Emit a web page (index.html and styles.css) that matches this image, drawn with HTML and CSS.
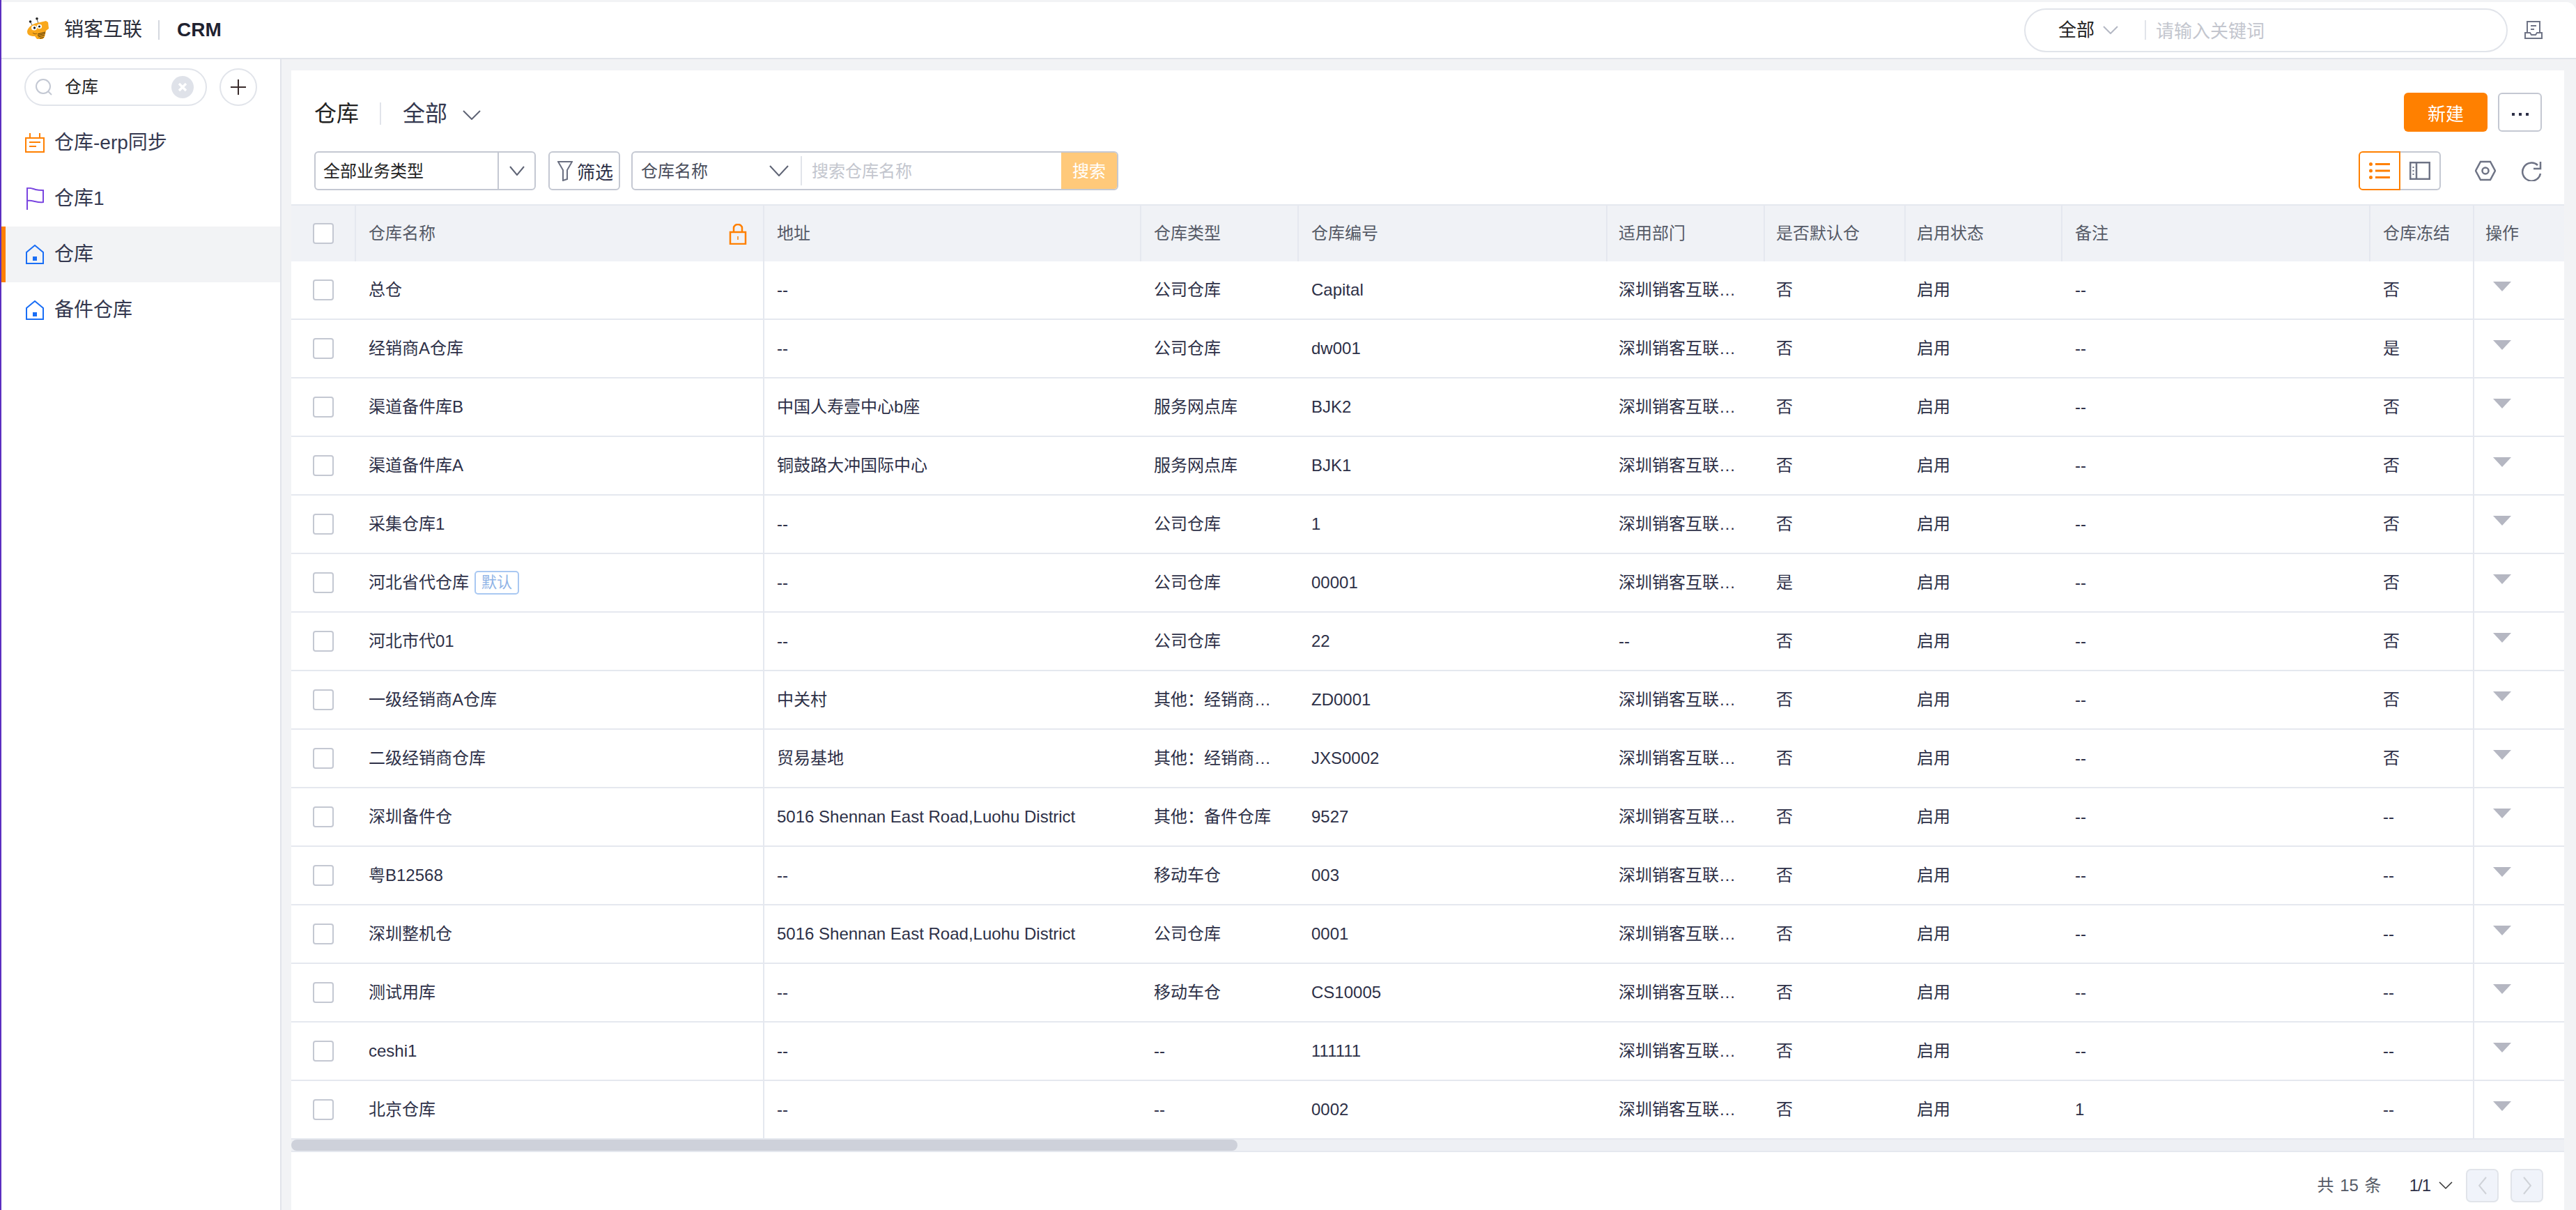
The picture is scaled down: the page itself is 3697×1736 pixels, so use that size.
FILE: index.html
```html
<!DOCTYPE html>
<html lang="zh-CN">
<head>
    <meta charset="UTF-8">
    <meta name="viewport" content="width=device-width, initial-scale=1.0">
    <title>仓库 - CRM</title>
    <link rel="stylesheet" href="styles.css">
</head>
<body>
    <header class="topbar">
        <div class="brand">
            <svg class="brand-logo" width="34" height="36" viewBox="0 0 34 36">
                <path d="M5 7l3 6M14 2l2 7" stroke="#555" stroke-width="1" fill="none"/>
                <circle cx="4.500" cy="6" r="1.800" fill="#222"/>
                <circle cx="14" cy="1.800" r="1.800" fill="#222"/>
                <path d="M0 20C1 14 8 9 14 8L27 5l3 2 1 9-4 3-2 9-3 3h-8l-3-4C5 27 0 26 0 20z" fill="#f9a81c"/>
                <ellipse cx="10" cy="15" rx="4" ry="3.500" fill="#fff"/>
                <ellipse cx="17.500" cy="13" rx="3.600" ry="3.200" fill="#fff"/>
                <circle cx="10.500" cy="15" r="1.700" fill="#222"/>
                <circle cx="17.500" cy="13" r="1.600" fill="#222"/>
                <path d="M8 22c2 2 4 2 6 1" stroke="#8a5a10" stroke-width="1" fill="none"/>
                <path d="M15 24l11-3M15 26l11-3M16 28l9-2.500M18 30l6-1.500" stroke="#4a3208" stroke-width="1" fill="none"/>
            </svg>
            <span class="brand-name">销客互联</span>
            <span class="brand-sep"></span>
            <span class="brand-app">CRM</span>
        </div>
        <div class="top-search">
            <span class="top-scope">全部</span>
            <svg class="chev" width="22" height="12" viewBox="0 0 22 12"><path d="M1 1l10 10L21 1" stroke="#b4b8c4" stroke-width="2" fill="none"/></svg>
            <span class="top-sep"></span>
            <span class="top-placeholder">请输入关键词</span>
        </div>
        <svg class="top-icon" width="26" height="26" viewBox="0 0 26 26" fill="none" stroke="#6e7385" stroke-width="2">
            <path d="M4 16V1h18v15"/>
            <path d="M1 17h7l2 3h6l2-3h7v8H1z"/>
            <path d="M9 7h8M9 12h5"/>
        </svg>
    </header>

    <div class="layout">
        <aside class="sidebar">
            <div class="side-search">
                <div class="side-input">
                    <svg width="24" height="24" viewBox="0 0 24 24" fill="none" stroke="#c3c8d3" stroke-width="2"><circle cx="11" cy="11" r="10"/><path d="M18 18l5 5"/></svg>
                    <span class="side-query">仓库</span>
                    <span class="side-clear">
                        <svg width="14" height="14" viewBox="0 0 14 14"><path d="M2 2l10 10M12 2L2 12" stroke="#fff" stroke-width="3.400"/></svg>
                    </span>
                </div>
                <span class="side-add">
                    <svg width="22" height="22" viewBox="0 0 22 22"><path d="M11 0v22M0 11h22" stroke="#3a2c2c" stroke-width="2"/></svg>
                </span>
            </div>
            <ul class="side-list">
                <li class="side-item">
                    <svg width="28" height="28" viewBox="0 0 28 28" fill="none" stroke="#ff8000" stroke-width="2"><path d="M1 7h26v20H1zM7 0v7M21 0v7"/><path d="M6 13h16M6 19h10"/></svg>
                    仓库-erp同步
                </li>
                <li class="side-item">
                    <svg width="28" height="32" viewBox="0 0 28 32" fill="none" stroke="#7a45e0" stroke-width="2"><path d="M3 32V1c5-1 8 1 12 2 4 1 7 1 11 1v17c-4 1-8 0-12-1-4-1-7-2-11-1"/></svg>
                    仓库1
                </li>
                <li class="side-item active">
                    <svg width="28" height="28" viewBox="0 0 28 28" fill="none" stroke="#1a6ef5" stroke-width="2"><path d="M2 27V11L14 1l12 10v16z"/><rect x="11" y="17" width="6" height="6" fill="#1a6ef5" stroke="none"/></svg>
                    仓库
                </li>
                <li class="side-item">
                    <svg width="28" height="28" viewBox="0 0 28 28" fill="none" stroke="#1a6ef5" stroke-width="2"><path d="M2 27V11L14 1l12 10v16z"/><rect x="11" y="17" width="6" height="6" fill="#1a6ef5" stroke="none"/></svg>
                    备件仓库
                </li>
            </ul>
        </aside>

        <main class="main">
            <section class="card">
                <div class="toolbar">
                    <div class="title-row">
                        <h1 class="title">仓库</h1>
                        <span class="title-sep"></span>
                        <span class="title-scope">全部</span>
                        <svg class="title-chev" width="26" height="14" viewBox="0 0 26 14"><path d="M1 1l12 12L25 1" stroke="#5f6475" stroke-width="2" fill="none"/></svg>
                        <div class="title-actions">
                            <button class="btn-new">新建</button>
                            <button class="btn-more"><i></i><i></i><i></i></button>
                        </div>
                    </div>
                    <div class="filter-row">
                        <div class="select-box">
                            <span class="select-text">全部业务类型</span>
                            <span class="select-arrow">
                                <svg width="22" height="14" viewBox="0 0 22 14"><path d="M1 1l10 12L21 1" stroke="#5f6475" stroke-width="2" fill="none"/></svg>
                            </span>
                        </div>
                        <button class="btn-filter">
                            <svg width="22" height="30" viewBox="0 0 22 30" fill="none" stroke="#6a6f80" stroke-width="2"><path d="M1 2h20l-7 12v13l-6 2V14z"/></svg>
                            筛选
                        </button>
                        <div class="name-search">
                            <span class="name-field">仓库名称</span>
                            <svg width="28" height="16" viewBox="0 0 28 16"><path d="M1 1l13 14L27 1" stroke="#5f6475" stroke-width="2" fill="none"/></svg>
                            <span class="name-sep"></span>
                            <span class="name-placeholder">搜索仓库名称</span>
                            <span class="name-btn">搜索</span>
                        </div>
                        <div class="view-tools">
                            <div class="view-toggle">
                                <span class="view-btn on">
                                    <svg width="30" height="24" viewBox="0 0 30 24" fill="#ff8000"><circle cx="2.500" cy="2.500" r="2.500"/><circle cx="2.500" cy="12" r="2.500"/><circle cx="2.500" cy="21.500" r="2.500"/><rect x="9" y="1" width="21" height="3"/><rect x="9" y="10.500" width="21" height="3"/><rect x="9" y="20" width="21" height="3"/></svg>
                                </span>
                                <span class="view-btn">
                                    <svg width="30" height="26" viewBox="0 0 30 26" fill="none" stroke="#6e7385" stroke-width="2.500"><rect x="1.200" y="1.200" width="27.600" height="23.600"/><path d="M10 1v24"/><path d="M5.500 7v12" stroke-width="2" stroke-dasharray="2 3"/></svg>
                                </span>
                            </div>
                            <svg class="tool-gear" width="30" height="30" viewBox="0 0 30 30" fill="none" stroke="#6e7385" stroke-width="2.500"><path d="M8 2h14l7 13-7 13H8L1 15z"/><circle cx="15" cy="15" r="4.500"/></svg>
                            <svg class="tool-refresh" width="30" height="30" viewBox="0 0 30 30" fill="none" stroke="#6e7385" stroke-width="2.500"><path d="M28 19A13 13 0 1 1 24 7"/><path d="M28 2v10H18"/></svg>
                        </div>
                    </div>
                </div>

                <table class="grid">
                    <colgroup>
                        <col class="c-check"><col class="c-name"><col class="c-addr"><col class="c-type"><col class="c-code"><col class="c-dept"><col class="c-def"><col class="c-state"><col class="c-note"><col class="c-freeze"><col class="c-op">
                    </colgroup>
                    <thead>
                        <tr>
                            <th class="check"><span class="box"></span></th>
                            <th class="name-head">仓库名称
                                <svg class="lock" width="26" height="30" viewBox="0 0 26 30" fill="none" stroke="#ff8000" stroke-width="2.500"><rect x="2" y="12" width="22" height="17"/><path d="M7 12V6a6 5 0 0 1 12 0v6"/><path d="M13 18v5" stroke-width="1.500"/></svg>
                            </th>
                            <th>地址</th><th>仓库类型</th><th>仓库编号</th><th>适用部门</th><th>是否默认仓</th><th>启用状态</th><th>备注</th><th>仓库冻结</th><th>操作</th>
                        </tr>
                    </thead>
                    <tbody>
                        <tr><td class="check"><span class="box"></span></td><td class="name">总仓</td><td>--</td><td>公司仓库</td><td>Capital</td><td>深圳销客互联…</td><td>否</td><td>启用</td><td>--</td><td class="freeze">否</td><td class="op"><span class="arrow"></span></td></tr>
                        <tr><td class="check"><span class="box"></span></td><td class="name">经销商A仓库</td><td>--</td><td>公司仓库</td><td>dw001</td><td>深圳销客互联…</td><td>否</td><td>启用</td><td>--</td><td class="freeze">是</td><td class="op"><span class="arrow"></span></td></tr>
                        <tr><td class="check"><span class="box"></span></td><td class="name">渠道备件库B</td><td>中国人寿壹中心b座</td><td>服务网点库</td><td>BJK2</td><td>深圳销客互联…</td><td>否</td><td>启用</td><td>--</td><td class="freeze">否</td><td class="op"><span class="arrow"></span></td></tr>
                        <tr><td class="check"><span class="box"></span></td><td class="name">渠道备件库A</td><td>铜鼓路大冲国际中心</td><td>服务网点库</td><td>BJK1</td><td>深圳销客互联…</td><td>否</td><td>启用</td><td>--</td><td class="freeze">否</td><td class="op"><span class="arrow"></span></td></tr>
                        <tr><td class="check"><span class="box"></span></td><td class="name">采集仓库1</td><td>--</td><td>公司仓库</td><td>1</td><td>深圳销客互联…</td><td>否</td><td>启用</td><td>--</td><td class="freeze">否</td><td class="op"><span class="arrow"></span></td></tr>
                        <tr><td class="check"><span class="box"></span></td><td class="name">河北省代仓库<span class="tag">默认</span></td><td>--</td><td>公司仓库</td><td>00001</td><td>深圳销客互联…</td><td>是</td><td>启用</td><td>--</td><td class="freeze">否</td><td class="op"><span class="arrow"></span></td></tr>
                        <tr><td class="check"><span class="box"></span></td><td class="name">河北市代01</td><td>--</td><td>公司仓库</td><td>22</td><td>--</td><td>否</td><td>启用</td><td>--</td><td class="freeze">否</td><td class="op"><span class="arrow"></span></td></tr>
                        <tr><td class="check"><span class="box"></span></td><td class="name">一级经销商A仓库</td><td>中关村</td><td>其他：经销商…</td><td>ZD0001</td><td>深圳销客互联…</td><td>否</td><td>启用</td><td>--</td><td class="freeze">否</td><td class="op"><span class="arrow"></span></td></tr>
                        <tr><td class="check"><span class="box"></span></td><td class="name">二级经销商仓库</td><td>贸易基地</td><td>其他：经销商…</td><td>JXS0002</td><td>深圳销客互联…</td><td>否</td><td>启用</td><td>--</td><td class="freeze">否</td><td class="op"><span class="arrow"></span></td></tr>
                        <tr><td class="check"><span class="box"></span></td><td class="name">深圳备件仓</td><td>5016 Shennan East Road,Luohu District</td><td>其他：备件仓库</td><td>9527</td><td>深圳销客互联…</td><td>否</td><td>启用</td><td>--</td><td class="freeze">--</td><td class="op"><span class="arrow"></span></td></tr>
                        <tr><td class="check"><span class="box"></span></td><td class="name">粤B12568</td><td>--</td><td>移动车仓</td><td>003</td><td>深圳销客互联…</td><td>否</td><td>启用</td><td>--</td><td class="freeze">--</td><td class="op"><span class="arrow"></span></td></tr>
                        <tr><td class="check"><span class="box"></span></td><td class="name">深圳整机仓</td><td>5016 Shennan East Road,Luohu District</td><td>公司仓库</td><td>0001</td><td>深圳销客互联…</td><td>否</td><td>启用</td><td>--</td><td class="freeze">--</td><td class="op"><span class="arrow"></span></td></tr>
                        <tr><td class="check"><span class="box"></span></td><td class="name">测试用库</td><td>--</td><td>移动车仓</td><td>CS10005</td><td>深圳销客互联…</td><td>否</td><td>启用</td><td>--</td><td class="freeze">--</td><td class="op"><span class="arrow"></span></td></tr>
                        <tr><td class="check"><span class="box"></span></td><td class="name">ceshi1</td><td>--</td><td>--</td><td>111111</td><td>深圳销客互联…</td><td>否</td><td>启用</td><td>--</td><td class="freeze">--</td><td class="op"><span class="arrow"></span></td></tr>
                        <tr><td class="check"><span class="box"></span></td><td class="name">北京仓库</td><td>--</td><td>--</td><td>0002</td><td>深圳销客互联…</td><td>否</td><td>启用</td><td>1</td><td class="freeze">--</td><td class="op"><span class="arrow"></span></td></tr>
                    </tbody>
                </table>

                <div class="hscroll"><div class="hscroll-thumb"></div></div>

                <div class="pager">
                    <span class="pager-total">共 15 条</span>
                    <span class="pager-page">1/1</span>
                    <svg class="pager-chev" width="20" height="12" viewBox="0 0 20 12"><path d="M1 1l9 9 9-9" stroke="#333" stroke-width="1.500" fill="none"/></svg>
                    <span class="pager-btn"><svg width="12" height="26" viewBox="0 0 12 26"><path d="M11 1L1 13l10 12" stroke="#cfd2d8" stroke-width="2" fill="none"/></svg></span>
                    <span class="pager-btn"><svg width="12" height="26" viewBox="0 0 12 26"><path d="M1 1l10 12L1 25" stroke="#cfd2d8" stroke-width="2" fill="none"/></svg></span>
                </div>
            </section>
        </main>
    </div>
</body>
</html>
```

FILE: styles.css
```css
* {
    margin: 0;
    padding: 0;
    box-sizing: border-box;
    font-family: "Liberation Sans", "Noto Sans CJK SC", sans-serif;
}

body {
    width: 3697px;
    height: 1736px;
    overflow: hidden;
    display: flex;
    flex-direction: column;
    padding-top: 3px;
    background: #f2f3f5;
    border-left: 2px solid #5b2fc0;
    color: #2d3047;
    font-size: 24px;
    line-height: 32px;
}

svg {
    display: block;
    flex: none;
}

/* top bar */
.topbar {
    height: 82px;
    flex: none;
    display: flex;
    align-items: center;
    padding-left: 37px;
    background: #fff;
    border-bottom: 2px solid #e1e4ea;
    border-top-right-radius: 14px;
}

.brand {
    display: flex;
    align-items: center;
}

.brand-name {
    margin-left: 19px;
    font-size: 28px;
    color: #2a2c38;
}

.brand-sep {
    width: 2px;
    height: 28px;
    margin: 0 25px 0 23px;
    background: #d5d8df;
}

.brand-app {
    font-size: 28px;
    font-weight: 700;
    color: #1f2230;
}

.top-search {
    width: 694px;
    height: 63px;
    margin-left: auto;
    display: flex;
    align-items: center;
    padding-left: 47px;
    border: 2px solid #e1e4ea;
    border-radius: 32px;
}

.top-scope {
    font-size: 26px;
    color: #222;
}

.top-search .chev {
    margin-left: 12px;
}

.top-sep {
    width: 2px;
    height: 28px;
    margin: 0 14px 0 38px;
    background: #e1e4ea;
}

.top-placeholder {
    padding-top: 3px;
    font-size: 26px;
    color: #c3c6ce;
}

.top-icon {
    margin: 0 48px 0 24px;
}

.layout {
    flex: 1;
    display: flex;
    min-height: 0;
}

/* sidebar */
.sidebar {
    width: 402px;
    flex: none;
    background: #fff;
    border-right: 2px solid #e1e4ea;
}

.side-search {
    display: flex;
    align-items: center;
    gap: 18px;
    padding: 13px 0 13px 33px;
}

.side-input {
    width: 262px;
    height: 54px;
    display: flex;
    align-items: center;
    padding-left: 14px;
    border: 2px solid #e1e4ea;
    border-radius: 27px;
}

.side-query {
    margin-left: 18px;
    color: #222;
}

.side-clear {
    width: 32px;
    height: 32px;
    margin-left: auto;
    margin-right: 17px;
    display: flex;
    align-items: center;
    justify-content: center;
    border-radius: 50%;
    background: #dfe2e9;
}

.side-add {
    width: 54px;
    height: 54px;
    display: flex;
    align-items: center;
    justify-content: center;
    border: 2px solid #e1e4ea;
    border-radius: 50%;
}

.side-list {
    list-style: none;
}

.side-item {
    height: 80px;
    display: flex;
    align-items: center;
    gap: 14px;
    padding-left: 34px;
    font-size: 28px;
    color: #34384f;
}

.side-item.active {
    padding-left: 28px;
    background: #f2f3f5;
    border-left: 6px solid #ff8000;
}

/* main card */
.main {
    flex: 1;
    min-width: 0;
    padding: 16px 17px 0 14px;
}

.card {
    height: 100%;
    background: #fff;
}

.toolbar {
    height: 194px;
    padding: 32px 32px 0 33px;
    border-bottom: 2px solid #e5e8ef;
}

.title-row {
    height: 56px;
    margin-bottom: 28px;
    display: flex;
    align-items: center;
}

.title {
    padding-top: 3px;
    font-size: 32px;
    font-weight: 400;
    color: #222;
}

.title-sep {
    width: 2px;
    height: 32px;
    margin: 3px 31px 0 30px;
    background: #e1e4ea;
}

.title-scope {
    margin-right: 22px;
    padding-top: 3px;
    font-size: 32px;
    color: #34384f;
}

.title-chev {
    margin-top: 7px;
}

.title-actions {
    margin-left: auto;
    display: flex;
    gap: 15px;
}

.btn-new {
    width: 120px;
    height: 56px;
    border: none;
    border-radius: 6px;
    background: #ff8000;
    color: #fff;
    font-size: 26px;
}

.btn-more {
    width: 63px;
    height: 56px;
    display: flex;
    align-items: center;
    justify-content: center;
    gap: 6px;
    padding-top: 6px;
    background: #fff;
    border: 2px solid #c4c8d2;
    border-radius: 6px;
}

.btn-more i {
    width: 4px;
    height: 4px;
    background: #2d3047;
}

.filter-row {
    display: flex;
    align-items: center;
    height: 56px;
}

.select-box {
    width: 318px;
    height: 56px;
    display: flex;
    align-items: center;
    border: 2px solid #c4c8d2;
    border-radius: 6px;
}

.select-text {
    flex: 1;
    padding: 2px 0 0 11px;
    color: #222;
}

.select-arrow {
    width: 53px;
    height: 100%;
    display: flex;
    align-items: center;
    justify-content: center;
    border-left: 2px solid #c4c8d2;
}

.btn-filter {
    width: 103px;
    height: 56px;
    margin-left: 18px;
    display: flex;
    align-items: center;
    gap: 6px;
    padding-left: 11px;
    background: #fff;
    border: 2px solid #c4c8d2;
    border-radius: 6px;
    font-size: 26px;
    color: #2d3047;
}

.name-search {
    width: 699px;
    height: 56px;
    margin-left: 16px;
    display: flex;
    align-items: center;
    padding-left: 12px;
    border: 2px solid #c4c8d2;
    border-radius: 6px;
    overflow: hidden;
}

.name-field {
    width: 184px;
    padding-top: 2px;
    color: #4a4e5c;
}

.name-sep {
    width: 2px;
    height: 42px;
    margin: 0 14px 0 17px;
    background: #e1e4ea;
}

.name-placeholder {
    padding-top: 2px;
    color: #c3c6ce;
}

.name-btn {
    width: 80px;
    height: 100%;
    margin-left: auto;
    display: flex;
    align-items: center;
    justify-content: center;
    padding-top: 2px;
    background: #ffc97a;
    color: #fff;
}

.view-tools {
    margin-left: auto;
    display: flex;
    align-items: center;
}

.view-toggle {
    width: 118px;
    height: 56px;
    display: flex;
}

.view-btn {
    width: 59px;
    display: flex;
    align-items: center;
    justify-content: center;
    border: 2px solid #c4c8d2;
    border-left: none;
    border-radius: 0 6px 6px 0;
}

.view-btn.on {
    width: 60px;
    border: 2px solid #ff8000;
    border-radius: 6px 0 0 6px;
}

.tool-gear {
    margin-left: 49px;
}

.tool-refresh {
    margin-left: 36px;
}

/* table */
.grid {
    width: 100%;
    table-layout: fixed;
    border-collapse: separate;
    border-spacing: 0;
}

.c-check { width: 93px; }
.c-name { width: 586px; }
.c-addr { width: 541px; }
.c-type { width: 226px; }
.c-code { width: 443px; }
.c-dept { width: 226px; }
.c-def { width: 202px; }
.c-state { width: 225px; }
.c-note { width: 442px; }
.c-freeze { width: 149px; }
.c-op { width: 129px; }

.grid th {
    height: 80px;
    padding-left: 18px;
    background: #f0f2f6;
    border-right: 2px solid #e5e8ef;
    font-size: 24px;
    font-weight: 400;
    color: #555a66;
    text-align: left;
}

.grid th:last-child {
    border-right: none;
    padding-left: 16px;
}

.grid td {
    height: 84px;
    padding-left: 18px;
    border-bottom: 2px solid #e5e8ef;
    white-space: nowrap;
}

/* dept, default and state columns sit a little closer to their divider */
.grid th:nth-child(n+6):nth-child(-n+8),
.grid td:nth-child(n+6):nth-child(-n+8) {
    padding-left: 16px;
}

.grid .check {
    padding-left: 31px;
}

.grid td.name,
.grid td.freeze {
    border-right: 2px solid #e5e8ef;
}

.grid td.op {
    position: relative;
}

.box {
    display: block;
    width: 30px;
    height: 30px;
    background: #fff;
    border: 2px solid #c4c8d2;
    border-radius: 4px;
}

.name-head {
    position: relative;
}

.lock {
    position: absolute;
    top: 26px;
    right: 23px;
}

.tag {
    display: inline-block;
    height: 34px;
    margin-left: 8px;
    padding: 0 8px;
    border: 2px solid #a9c8f2;
    border-radius: 5px;
    font-size: 22px;
    line-height: 30px;
    color: #8fb3e6;
    vertical-align: 1px;
}

.arrow {
    position: absolute;
    top: 29px;
    left: 27px;
    width: 0;
    height: 0;
    border-left: 13px solid transparent;
    border-right: 13px solid transparent;
    border-top: 14px solid #b5b7c2;
}

.hscroll {
    height: 18px;
    background: #eef0f4;
    border-bottom: 2px solid #e5e8ef;
}

.hscroll-thumb {
    width: 1358px;
    height: 16px;
    border-radius: 8px;
    background: #ced1da;
}

.pager {
    display: flex;
    align-items: center;
    justify-content: flex-end;
    height: 83px;
    padding: 13px 30px 0 0;
    color: #555a66;
}

.pager-total {
    margin-right: 40px;
    word-spacing: 2px;
}

.pager-page {
    color: #2d3047;
    letter-spacing: -1px;
}

.pager-chev {
    margin: 0 19px 0 12px;
}

.pager-btn {
    width: 47px;
    height: 48px;
    display: flex;
    align-items: center;
    justify-content: center;
    margin-left: 17px;
    background: #f0f3fa;
    border: 2px solid #e1e4ea;
    border-radius: 7px;
}

.pager-chev + .pager-btn {
    margin-left: 0;
}
```
